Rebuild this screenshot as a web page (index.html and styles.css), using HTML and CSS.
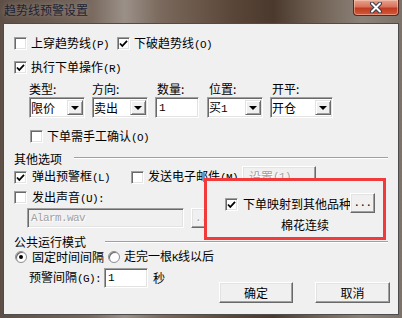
FILE: index.html
```html
<!DOCTYPE html>
<html lang="zh-CN">
<head>
    <meta charset="UTF-8">
    <title>趋势线预警设置</title>
    <link rel="stylesheet" href="styles.css">
</head>
<body>
<div class="window">
    <div class="titlebar">
        <span class="title">趋势线预警设置</span>
        <span class="close">
            <svg width="14" height="11" viewBox="0 0 14 11">
                <path d="M3 1.5 L11 9.5 M11 1.5 L3 9.5" stroke="#3b3d4c" stroke-width="4" stroke-linecap="round"/>
                <path d="M3 1.5 L11 9.5 M11 1.5 L3 9.5" stroke="#fff" stroke-width="2" stroke-linecap="round"/>
            </svg>
        </span>
    </div>
    <div class="client">
        <div class="row r1">
            <span class="check"></span>
            <span class="lbl gap4">上穿趋势线<span class="en">(P)</span></span>
            <span class="check on sp8"><svg width="11" height="11" viewBox="0 0 11 11"><path d="M2 5.5 L4.3 8 L9 2.8" stroke="#000" stroke-width="1.8" fill="none"/></svg></span>
            <span class="lbl gap4">下破趋势线<span class="en">(O)</span></span>
        </div>
        <div class="row r2">
            <span class="check on"><svg width="11" height="11" viewBox="0 0 11 11"><path d="M2 5.5 L4.3 8 L9 2.8" stroke="#000" stroke-width="1.8" fill="none"/></svg></span>
            <span class="lbl gap4">执行下单操作<span class="en">(R)</span></span>
        </div>
        <div class="params">
            <div class="param p1">
                <span class="plabel">类型:</span>
                <div class="combo"><span>限价</span><span class="arrow"></span></div>
            </div>
            <div class="param p2">
                <span class="plabel">方向:</span>
                <div class="combo"><span>卖出</span><span class="arrow"></span></div>
            </div>
            <div class="param p3">
                <span class="plabel ind">数量:</span>
                <div class="edit"><span class="en">1</span></div>
            </div>
            <div class="param p4">
                <span class="plabel ind">位置:</span>
                <div class="combo"><span>买<span class="en">1</span></span><span class="arrow"></span></div>
            </div>
            <div class="param p5">
                <span class="plabel ind">开平:</span>
                <div class="combo"><span>开仓</span><span class="arrow"></span></div>
            </div>
        </div>
        <div class="row r3">
            <span class="check"></span>
            <span class="lbl gap4">下单需手工确认<span class="en">(O)</span></span>
        </div>

        <div class="ghead g1">
            <span>其他选项</span>
            <span class="etch"></span>
        </div>
        <div class="row r4">
            <span class="check on"><svg width="11" height="11" viewBox="0 0 11 11"><path d="M2 5.5 L4.3 8 L9 2.8" stroke="#000" stroke-width="1.8" fill="none"/></svg></span>
            <span class="lbl gap5">弹出预警框<span class="en">(L)</span></span>
            <span class="check sp21"></span>
            <span class="lbl gap4">发送电子邮件<span class="en">(M)</span></span>
            <span class="btn disabled setup">设置<span class="en">(1)...</span></span>
        </div>
        <div class="row r5">
            <span class="check"></span>
            <span class="lbl gap5">发出声音<span class="en">(U):</span></span>
        </div>
        <div class="row r6">
            <div class="edit disabled wav"><span class="en">Alarm.wav</span></div>
            <span class="btn disabled browse"><span class="en">...</span></span>
        </div>

        <div class="mapping">
            <div class="maprow">
                <span class="check on"><svg width="11" height="11" viewBox="0 0 11 11"><path d="M2 5.5 L4.3 8 L9 2.8" stroke="#000" stroke-width="1.8" fill="none"/></svg></span>
                <span class="lbl gap5">下单映射到其他品种</span>
                <span class="btn more"><span class="en">...</span></span>
            </div>
            <div class="mapname">棉花连续</div>
        </div>

        <div class="ghead g2">
            <span>公共运行模式</span>
            <span class="etch"></span>
        </div>
        <div class="row r7">
            <span class="radio on"></span>
            <span class="lbl gap5">固定时间间隔</span>
            <span class="radio sp4"></span>
            <span class="lbl gap4">走完一根<span class="en">K</span>线以后</span>
        </div>
        <div class="bottom">
            <div class="row interval">
                <span class="lbl">预警间隔<span class="en">(G):</span></span>
                <div class="edit secs"><span class="en">1</span></div>
                <span class="lbl gap5">秒</span>
            </div>
            <div class="actions">
                <span class="btn ok">确定</span>
                <span class="btn cancel">取消</span>
            </div>
        </div>
    </div>
</div>
</body>
</html>
```

FILE: styles.css
```css
* {
    box-sizing: border-box;
}
body {
    margin: 0;
    font-family: "Noto Sans CJK SC", sans-serif;
    font-size: 12px;
    line-height: 14px;
    color: #000;
}
.en {
    font-family: "Liberation Mono", monospace;
    font-size: 11px;
    letter-spacing: -0.6px;
}
.window {
    width: 402px;
    height: 318px;
    display: flex;
    flex-direction: column;
    background: linear-gradient(90deg, #5e4f46 0, #76665b 22%, #9b9088 31%, #7a695c 40%, #5a4638 58%, #4b392e 68%, #6e5e52 78%, #8c8278 90%, #7d7269 100%);
}
.titlebar {
    height: 23px;
    display: flex;
    justify-content: space-between;
    align-items: flex-start;
}
.title {
    padding: 3px 0 0 4px;
    color: #1d2232;
    text-shadow: 0 0 6px rgba(255, 255, 255, 0.35);
}
.close {
    width: 46px;
    height: 16px;
    margin-right: 3px;
    display: flex;
    align-items: center;
    justify-content: center;
    border: 1px solid #56291f;
    border-top: none;
    border-radius: 0 0 4px 4px;
    background: linear-gradient(#e7a38f 0, #d8735b 45%, #c23a20 55%, #cf5b3d 100%);
    box-shadow: inset 0 0 0 1px rgba(255, 220, 200, 0.45);
}
.client {
    position: relative;
    height: 292px;
    margin: 0 3px;
    padding: 13px 10px 0 10px;
    background: #f0f0f0;
    border: 1px solid #4c4c4c;
}
.row {
    display: flex;
    align-items: center;
}
.lbl {
    white-space: nowrap;
}
.gap4 { margin-left: 4px; }
.gap5 { margin-left: 5px; }
.sp4 { margin-left: 4px; }
.sp8 { margin-left: 8px; }
.sp21 { margin-left: 21px; }

.check {
    width: 13px;
    height: 13px;
    flex: none;
    display: flex;
    align-items: center;
    justify-content: center;
    background: #fff;
    border: 1px solid;
    border-color: #a0a0a0 #fff #fff #a0a0a0;
    box-shadow: inset 1px 1px #696969, inset -1px -1px #e3e3e3;
}
.radio {
    position: relative;
    width: 12px;
    height: 12px;
    flex: none;
    border-radius: 50%;
    background: radial-gradient(circle at 60% 60%, #fff 0, #fff 45%, #e4e4e4 100%);
    border: 1px solid #8e8e8e;
    box-shadow: inset 1px 1px #6c6c6c;
}
.radio.on::after {
    content: "";
    position: absolute;
    left: 3px;
    top: 3px;
    width: 4px;
    height: 4px;
    border-radius: 50%;
    background: #000;
}

.r1 { height: 13px; }
.r2 { height: 13px; margin-top: 11px; }
.params {
    display: flex;
    margin: 8px 0 0 15px;
}
.param {
    display: flex;
    flex-direction: column;
}
.plabel {
    height: 14px;
    margin-bottom: 1px;
}
.plabel.ind { padding-left: 2px; }
.p1 { width: 56px; margin-right: 7px; }
.p2 { width: 56px; margin-right: 7px; }
.p3 { width: 44px; margin-right: 8px; }
.p4 { width: 56px; margin-right: 7px; }
.p5 { width: 63px; }

.combo, .edit {
    height: 21px;
    display: flex;
    align-items: center;
    padding-left: 1px;
    background: #fff;
    border: 1px solid;
    border-color: #a0a0a0 #fff #fff #a0a0a0;
    box-shadow: inset 1px 1px #696969, inset -1px -1px #e3e3e3;
}
.edit { padding-left: 3px; }
.arrow {
    width: 16px;
    height: 15px;
    margin: 0 1px 0 auto;
    display: flex;
    align-items: center;
    justify-content: center;
    background: #f0f0f0;
    border: 1px solid;
    border-color: #e3e3e3 #696969 #696969 #e3e3e3;
    box-shadow: inset 1px 1px #fff, inset -1px -1px #a0a0a0;
}
.arrow::after {
    content: "";
    border-left: 4px solid transparent;
    border-right: 4px solid transparent;
    border-top: 4px solid #000;
    margin-top: 1px;
}
.r3 { height: 13px; margin: 12px 0 0 16px; }

.ghead {
    display: flex;
    height: 14px;
}
.etch {
    flex: 1;
    height: 2px;
    margin-top: 5px;
    border-top: 1px solid #a0a0a0;
    border-bottom: 1px solid #fff;
}
.g1 { margin-top: 9px; }
.g1 .etch { margin-left: 12px; }
.g2 { margin-top: 7px; line-height: 13px; }
.g2 .etch { margin-left: 19px; margin-top: 6px; }

.btn {
    display: flex;
    align-items: center;
    justify-content: center;
    flex: none;
    background: #f0f0f0;
    border: 1px solid;
    border-color: #fff #696969 #696969 #fff;
    box-shadow: inset -1px -1px #a0a0a0, inset 1px 1px #e3e3e3;
    white-space: nowrap;
}
.btn.disabled, .edit.disabled {
    color: #a0a0a0;
    text-shadow: 1px 1px #fff;
}
.edit.disabled { background: #f0f0f0; }

.r4 { height: 22px; }
.setup { width: 74px; height: 22px; margin-left: 4px; }
.r5 { height: 13px; margin-top: 3px; }
.r5 .lbl { margin-left: 5px; }
.r6 { height: 20px; margin-top: 4px; }
.wav { width: 157px; height: 20px; margin-left: 13px; }
.browse { width: 26px; height: 20px; margin-left: 7px; }

.mapping {
    position: absolute;
    left: 200px;
    top: 154px;
    width: 182px;
    height: 62px;
    padding: 12px 0 0 18px;
    background: #f0f0f0;
    border: 3px solid #f23a3a;
}
.maprow {
    display: flex;
    align-items: flex-end;
    height: 20px;
}
.maprow .check, .maprow .lbl {
    margin-bottom: 2px;
}
.more { width: 25px; height: 20px; margin-left: -1px; }
.mapname {
    margin-top: 5px;
    padding-left: 56px;
}

.r7 { height: 12px; margin-top: 2px; line-height: 12px; }
.r7 .radio:first-child { margin-left: 1px; }
.bottom {
    display: flex;
    align-items: flex-start;
    margin-top: 5px;
}
.interval { height: 20px; margin-left: 15px; }
.secs { width: 44px; height: 20px; margin-left: 3px; }
.actions {
    display: flex;
    margin: 14px -2px 0 auto;
}
.ok { width: 74px; height: 21px; }
.cancel { width: 75px; height: 21px; margin-left: 22px; }
```
